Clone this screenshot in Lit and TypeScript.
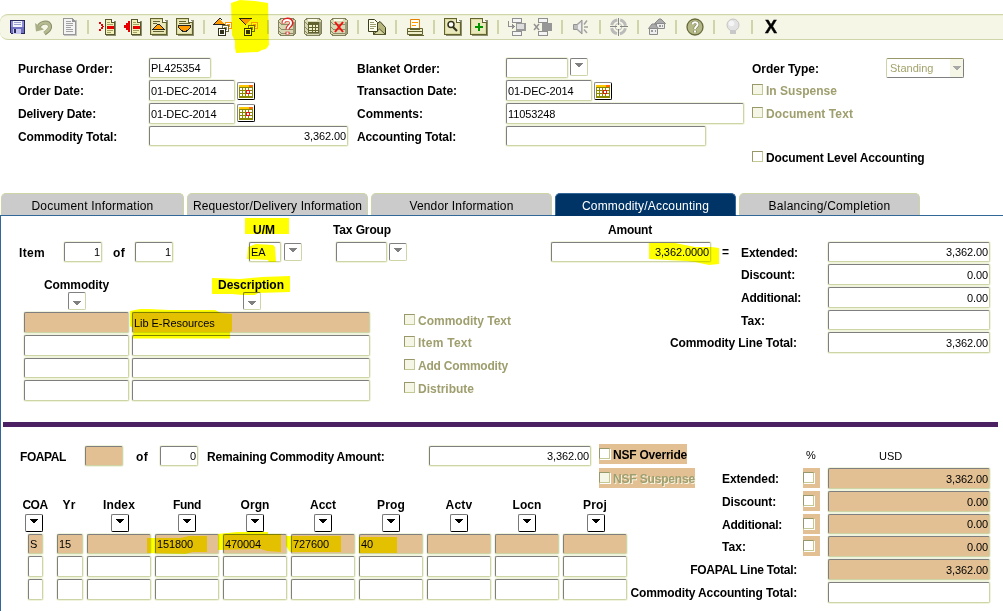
import { LitElement, html, svg, css, nothing } from "lit";
import { customElement } from "lit/decorators.js";
import { classMap } from "lit/directives/class-map.js";

const FAMILY = '"Liberation Sans", Arial, sans-serif';
const BOLD = `bold 12px ${FAMILY}`;
const TAB = `12px ${FAMILY}`;
const VALUE = `11px ${FAMILY}`;

const ruler = document.createElement("canvas").getContext("2d")!;

// letter spacing that makes a text run take up the given width
function tracking(text: string, width: number, font: string) {
	ruler.font = font;
	return `letter-spacing:${((width - ruler.measureText(text).width) / text.length).toFixed(3)}px`;
}

const label = (text: string, width: number, cls = "") => html`
	<span class="label ${cls}" style="${tracking(text, width, BOLD)}">${text}</span>
`;

// digits are 6px wide, everything else follows the font
function valueWidth(text: string) {
	ruler.font = VALUE;
	const digits = (text.match(/\d/g) ?? []).length;
	const dashes = (text.match(/-/g) ?? []).length;
	return ruler.measureText(text).width - digits * 0.12 - dashes * 0.6;
}

type FieldOptions = { right?: boolean; current?: boolean; tall?: boolean };

function field(width: string, value = "", { right = false, current = false, tall = false }: FieldOptions = {}) {
	const classes: Record<string, boolean> = { field: true, right, current, tall };
	if (width) classes[width] = true;

	return html`
		<div class="${classMap(classes)}">
			${value ? html`<span style="${tracking(value, valueWidth(value), VALUE)}">${value}</span>` : nothing}
		</div>
	`;
}

const lov = (cls = "") => html`
	<div class="lov ${cls}">
		<svg width="8" height="5" shape-rendering="crispEdges"><path d="M0 0H8V1H7V2H6V3H5V4H3V3H2V2H1V1H0Z" fill="currentColor" /></svg>
	</div>
`;

const calendar = () => html`
	<div class="calendar">
		<svg width="14" height="14" shape-rendering="crispEdges">
			<path d="M0 1H14V14H0Z" fill="#8a8a00" />
			<path d="M0 1H14V3H0Z" fill="#ffc800" />
			<path d="M10 1H14V3H10Z" fill="#ff6a00" />
			<path d="M1 4h2v2H1zM4 4h2v2H4zM7 4h2v2H7zM10 4h3v2h-3zM1 7h2v2H1zM4 7h2v2H4zM11 7h2v2h-2zM1 10h2v2H1zM4 10h2v2H4zM7 10h2v2H7zM10 10h3v2h-3z" fill="#fff" />
			<path d="M7 6H11V10H7Z" fill="#e01818" />
			<path d="M8 7H10V9H8Z" fill="#fff" />
		</svg>
	</div>
`;

const check = (text = "", width = 0, cls = "") => html`
	<div class="check ${cls}">
		<i class="box"></i>
		${text ? label(text, width) : nothing}
	</div>
`;

const page = svg`
	<path d="M3 3H19V19H3Z" fill="#8d8d70" />
	<path d="M1.5 1.5H13.5L17.5 5.5V17.5H1.5Z" fill="#dadaa0" stroke="#62622f" />
	<path d="M3 3H13V6H16V16H3Z" fill="#e9e9bd" />
	<path d="M13.5 1.5V5.5H17.5" fill="#fff" stroke="#62622f" />
`;

const record = svg`
	<path d="M9 4H19V19H9Z" fill="#8d8d70" />
	<path d="M8.5 2.5H14.5L17.5 5.5V17.5H8.5Z" fill="#f2f2b8" stroke="#55552e" />
	<path d="M14.5 2.5V5.5H17.5" fill="#fff" stroke="#55552e" />
	<path d="M10 5.5H13M10 7.5H16M10 13.5H16M10 15.5H14" stroke="#a2a268" />
	<path d="M10 9H17V12H10Z" fill="#e80000" />
`;

const database = svg`
	<path d="M1.5 3.5L4 1.5H16L18.5 3.5V16.5L16 18.5H4L1.5 16.5Z" fill="#d8d8b4" stroke="#80805a" />
	<path d="M2 5.5L5 7.5H15L18 5.5M2 10.5L5 12.5H15L18 10.5M2 14.5L5 16.5H15L18 14.5" fill="none" stroke="#8c8c68" />
	<path d="M5 2H14V4H5Z" fill="#fafae8" />
	<path d="M16 5H18V17H16Z" fill="#9b9b79" />
`;

// squares stacked in front of each other
const stack = svg`
	<path d="M12 5H19V12H12Z" fill="#ff9900" />
	<path d="M13 6H18V11H13Z" fill="#fff" />
	<path d="M14 7H17V10H14Z" fill="#ff9900" />
	<path d="M9 8H16V15H9Z" fill="#6b6b3c" />
	<path d="M10 9H15V14H10Z" fill="#fff" />
	<path d="M11 10H14V13H11Z" fill="#8f8f5c" />
	<path d="M5 11H13V19H5Z" fill="#33331c" />
	<path d="M6 12H12V18H6Z" fill="#fff" />
	<path d="M7 13H11V17H7Z" fill="#33331c" />
`;

const icons: Record<string, unknown> = {
	save: svg`
		<path d="M3 3H17L18 4V17H4L3 16Z" fill="#28285a" />
		<path d="M4 4H6V16H4ZM15 4H17V16H15Z" fill="#8c8cd8" />
		<path d="M4 10H17V16H4Z" fill="#7070c0" />
		<path d="M6 4H15V10H6Z" fill="#f4f4ff" />
		<path d="M7 5H14V6H7ZM7 7H14V8H7Z" fill="#9aa0d0" />
		<path d="M6 12H14V17H6Z" fill="#c6c6ee" />
		<path d="M7 12H9V16H7Z" fill="#28285a" />`,
	undo: svg`
		<g shape-rendering="auto">
			<path d="M5 11.5C6.5 5 15 3.5 17 8.5C18 12 15 14 11.5 16.5" fill="none" stroke="#8b906d" stroke-width="4" />
			<path d="M5 11.5C6.5 5.5 14.5 4 16.6 8.5C17.5 12 15 13.5 11.5 16" fill="none" stroke="#b5ba91" stroke-width="2.6" />
			<path d="M2 6L3 14.5L11 12.5Z" fill="#a9ae86" />
		</g>`,
	doc: svg`
		<path d="M5 3H18V19H5Z" fill="#c4c4c4" />
		<path d="M4 1H14V2H15V3H16V4H17V18H4Z" fill="#969696" />
		<path d="M5 2H13V5H16V17H5Z" fill="#f4f4f4" />
		<path d="M7 4.5H12M7 6.5H14M7 8.5H14M7 10.5H12M7 12.5H14M7 14.5H14" stroke="#a2a2a2" />`,
	insert: svg`${record}<path d="M2 5H4V7H6V9H7V10H6V12H4V14H2V12H4V10H5V9H4V7H2Z" fill="#e80000" />`,
	remove: svg`${record}<path d="M7 4V15H5V13H3V11H1V8H3V6H5V4Z" fill="#e80000" />`,
	prev: svg`${page}<path d="M4 4.5H11M4 6.5H8M4 14.5H15" stroke="#62622f" /><path d="M3 13V12H4V11H5V10H6V9H7V8H8V7H11V8H12V9H13V10H14V11H15V12H16V13Z" fill="#222" /><path d="M5 12V11H6V10H7V9H8V8H11V9H12V10H13V11H14V12Z" fill="#ff9900" />`,
	next: svg`${page}<path d="M4 4.5H11M4 6.5H15" stroke="#62622f" /><path d="M3 8H16V11H15V12H14V13H13V14H12V15H7V14H6V13H5V12H4V11H3Z" fill="#222" /><path d="M4 9H15V11H14V12H13V13H11V14H8V13H6V12H5V11H4Z" fill="#ff9900" />`,
	up: svg`${stack}<path d="M1 7H2V6H3V5H4V4H5V3H6V2H7V3H8V4H9V5H10V6H11V7Z" fill="#ff9900" /><path d="M1 6H2V5H3V4H4V3H5V2H6V1H8V2H9V3H8V2H6V3H5V4H4V5H3V6H2V7H12V8H0V7H1Z" fill="#222" />`,
	down: svg`${stack}<path d="M1 2H12V3H11V4H10V5H9V6H8V7H5V6H4V5H3V4H2V3H1Z" fill="#ff9900" /><path d="M0 1H13V2H0ZM1 2H2V3H3V4H4V5H5V6H6V7H7V8H6V7H5V6H4V5H3V4H2V3H1Z" fill="#222" />`,
	query: svg`${database}<g shape-rendering="auto" fill="none"><path d="M6.5 6.5C6 1.5 15 1 14.5 6.2C14.2 9 10.5 9 10.5 12.5M10.5 14.8V17.6" stroke="#e02020" stroke-width="4" /><path d="M6.5 6.2C6.5 2 14.5 2 14 6.2C13.8 9 10.5 9 10.5 12.3M10.5 15.2V17.2" stroke="#fff" stroke-width="2" /></g>`,
	table: svg`${database}<path d="M5 5H16V16H5Z" fill="#62622f" /><path d="M6 8H9V10H6ZM10 8H12V10H10ZM13 8H15V10H13ZM6 11H9V13H6ZM10 11H12V13H10ZM13 11H15V13H13ZM6 14H9V15H6ZM10 14H12V15H10ZM13 14H15V15H13Z" fill="#eeeeca" />`,
	cancel: svg`${database}<path d="M6 5L14 15M14 5L6 15" shape-rendering="auto" stroke="#f01010" stroke-width="2" />`,
	message: svg`
		<g shape-rendering="auto">
			<path d="M7 9L13 4.5L18.5 10.5V17.5H6.5Z" fill="#b6b67c" stroke="#3c3c1e" />
			<path d="M6.5 17.5L12.5 12L18.5 17.5Z" fill="#d5d5a2" stroke="#55552e" />
			<path d="M1.5 2.5H7.5L10.5 5.5V14.5H1.5Z" fill="#fffff0" stroke="#3c3c1e" />
			<path d="M3 5.5H7M3 7.5H9M3 9.5H9M3 11.5H7" stroke="#9c9c70" />
		</g>`,
	print: svg`
		<g shape-rendering="auto">
			<path d="M5.5 2.5H14.5V11.5H5.5Z" fill="#fff" stroke="#e58000" />
			<path d="M7 5.5H13M7 8.5H11" stroke="#ff9900" />
			<path d="M2.5 11.5H17.5V17.5H2.5Z" fill="#eeeec9" stroke="#62622f" />
			<path d="M5 12H15V13H5ZM3 14H17V15H3ZM4 18H19V19H4Z" fill="#62622f" />
		</g>`,
	find: svg`${page}<g shape-rendering="auto"><circle cx="8" cy="7.5" r="3" fill="#fff" stroke="#33331c" stroke-width="1.5" /><path d="M10 10L14 14" stroke="#33331c" stroke-width="2.2" /></g>`,
	add: svg`${page}<path d="M9 6H11V9H14V11H11V14H9V11H6V9H9Z" fill="#009400" />`,
	flowIn: svg`
		<path d="M5 1H15V6H5ZM5 14H15V19H5Z" fill="#8f8f8f" /><path d="M6 2H14V5H6ZM6 15H14V18H6Z" fill="#f4f4f4" />
		<path d="M9 6H19V14H9Z" fill="#999" /><path d="M10 7H17V12H10Z" fill="#ddd" />
		<path d="M1 4H2V9H5V7H6V8H7V9H8V10H7V11H6V12H5V10H1Z" fill="#8f8f8f" />`,
	flowOut: svg`
		<path d="M5 1H15V6H5ZM5 14H15V19H5Z" fill="#8f8f8f" /><path d="M6 2H14V5H6ZM6 15H14V18H6Z" fill="#f4f4f4" />
		<path d="M9 6H19V14H9Z" fill="#979797" />
		<path d="M1 7L6 13M6 7L1 13" fill="none" stroke="#929292" shape-rendering="auto" stroke-width="1.5" />`,
	sound: svg`
		<g shape-rendering="auto">
			<path d="M2.5 7.5H6L11 3V17L6 12.5H2.5Z" fill="#bdbdbd" stroke="#939393" />
			<path d="M7 8L10 5.5V14.5L7 12Z" fill="#eee" />
			<path d="M13 7.5L16 3.5M13 9.9H17M13 12.5L16 16" stroke="#a2a2a2" stroke-width="1.5" />
		</g>`,
	target: svg`
		<g shape-rendering="auto" fill="none" stroke="#bababa">
			<circle cx="9.5" cy="9.8" r="7" stroke-width="3" stroke-dasharray="8 3" stroke-dashoffset="-1.5" />
			<circle cx="9.5" cy="9.8" r="3.3" />
		</g>
		<path d="M9.5 1V8M9.5 12V19M1 9.5H8M11 9.5H19" stroke="#858585" />`,
	houses: svg`
		<g shape-rendering="auto">
			<path d="M7.5 6.5L12 2H14L18.5 6.5Z" fill="#aaa" stroke="#8a8a8a" />
			<path d="M9.5 6.5H17.5V11.5H9.5Z" fill="#eee" stroke="#8a8a8a" />
			<path d="M1.5 11.5L5 7H8L11.5 11.5Z" fill="#aaa" stroke="#8a8a8a" />
			<path d="M2.5 11.5H10.5V17.5H2.5Z" fill="#eee" stroke="#8a8a8a" />
			<path d="M4 13H6V15H4ZM8 13H9V15H8ZM12 8H14V10H12ZM15 8H16V10H15Z" fill="#999" />
		</g>`,
	help: svg`
		<g shape-rendering="auto" fill="none">
			<circle cx="10" cy="10" r="8" fill="#b4b887" stroke="#676b3b" stroke-width="1.3" />
			<path d="M7.5 7.5C7.5 4.5 12.8 4.5 12.6 7.6C12.4 9.5 10 9.7 10 12M10 13.6V15.6" stroke="#7c8054" stroke-width="3.2" />
			<path d="M7.5 7.5C7.5 4.5 12.8 4.5 12.6 7.6C12.4 9.5 10 9.7 10 12M10 13.6V15.6" stroke="#fff" stroke-width="2" />
		</g>`,
	hint: svg`
		<g shape-rendering="auto">
			<circle cx="10" cy="8" r="6" fill="#e3e3e3" stroke="#c4c4c4" />
			<circle cx="8.5" cy="6.5" r="2.8" fill="#f5f5f5" />
			<path d="M7 13H13V17H7Z" fill="#c8c8c8" />
		</g>`,
};

const toolbar = [
	"save", "undo", "doc", "|", "insert", "remove", "prev", "next", "|", "up", "down", "|",
	"query", "table", "cancel", "|", "message", "|", "print", "|", "find", "add", "|",
	"flowIn", "flowOut", "|", "sound", "|", "target", "|", "houses", "|", "help", "|", "hint", "|", "exit",
];

const tabs = [
	{ text: "Document Information", width: 122 },
	{ text: "Requestor/Delivery Information", width: 169 },
	{ text: "Vendor Information", width: 104 },
	{ text: "Commodity/Accounting", width: 127, active: true },
	{ text: "Balancing/Completion", width: 122 },
];

const foapal = [
	{ cls: "coa", name: "COA", width: 25, value: "S" },
	{ cls: "yr", name: "Yr", width: 13, value: "15" },
	{ cls: "seg index", name: "Index", width: 32, value: "" },
	{ cls: "seg", name: "Fund", width: 28, value: "151800" },
	{ cls: "seg", name: "Orgn", width: 29, value: "470004" },
	{ cls: "seg", name: "Acct", width: 26, value: "727600" },
	{ cls: "seg", name: "Prog", width: 28, value: "40" },
	{ cls: "seg", name: "Actv", width: 27, value: "" },
	{ cls: "seg", name: "Locn", width: 29, value: "" },
	{ cls: "seg proj", name: "Proj", width: 24, value: "" },
];

// marker strokes laid over the form
const marks = [
	"231,3 240,0 255,1 268,3 269,45 266,49 262,50 258,52 236,53 235,48 235,41 232,35",
	"245,218 289,218 289,234 245,234",
	"248,247 256,244 273,245 275,247 276,262 269,262 268,260 247,259",
	"212,278 240,279 262,277 290,276 290,292 258,293 255,295 243,295 232,294 212,294",
	"130,311 140,309 149,309 169,310 215,310 221,313 232,314 232,331 230,332 230,338.5 133,338.5 133,328 130,326",
	"649,243 675,243 695,247 711,247 719,248 719,264 709,265 695,262 686,261 649,259",
	"147,538 180,538 189,536 207,536 207,552 193,552 185,554 147,553",
	"218,534 237,532 268,532 268,534 281,534 281,552 267,551 261,549 218,550",
	"286,536 341,536 341,552 290,552 286,546",
	"359,537 397,537 397,553 359,553",
];

@customElement("app-root")
export class AppRoot extends LitElement {
	static override styles = css`
		:host {
			display: block;
			position: relative;
			isolation: isolate;
			width: 1003px;
			height: 611px;
			overflow: hidden;
			background: #fff;
			color: #000;
			font: 11px "Liberation Sans", Arial, sans-serif;
		}

		.marks {
			position: absolute;
			inset: 0;
			mix-blend-mode: multiply;
			pointer-events: none;
		}

		.toolbar {
			display: flex;
			align-items: center;
			box-sizing: border-box;
			height: 26px;
			margin-top: 14px;
			padding-left: 4px;
			background: #f6f6e6;
			border-block: 1px solid #cfd5a8;
			border-radius: 8px 0 0 8px;
			box-shadow: inset 0 1px #eef0d6;
		}

		.tool {
			display: flex;
			justify-content: center;
			width: 26px;

			& svg { display: block }
		}

		.sep {
			width: 2px;
			height: 14px;
			margin-inline: 5px;
			background: #cfd5a8;
		}

		.exit {
			font-size: 18px;
			font-weight: bold;
			line-height: 20px;
			-webkit-text-stroke: .4px #000;
		}

		.label {
			display: block;
			flex: none;
			height: 21px;
			font-size: 12px;
			font-weight: bold;
			line-height: 22px;
			white-space: nowrap;
		}

		.field {
			box-sizing: border-box;
			height: 20px;
			flex: none;
			padding: 0 1px;
			background: #fff;
			border: 1px solid;
			border-color: #7f7f7f #cdd4a6 #cdd4a6 #7f7f7f;
			border-radius: 2px;
			box-shadow: 0 0 0 1px #f1f4dd;
			line-height: 19px;
			white-space: nowrap;

			&.tall { height: 21px; line-height: 20px }
			&.right { text-align: right }
			&.current { background: #e3c093 }
		}

		.w32 { width: 32px }
		.w38 { width: 38px }
		.w51 { width: 51px }
		.w62 { width: 62px }
		.w86 { width: 86px }
		.w105 { width: 105px }
		.w160 { width: 160px }
		.w162 { width: 162px }
		.w199 { width: 199px }
		.w200 { width: 200px }
		.w238 { width: 238px }

		.lov, .calendar {
			display: flex;
			justify-content: center;
			box-sizing: border-box;
			flex: none;
			width: 18px;
			height: 18px;
			background: #fff;
			border: 1px solid;
			border-radius: 2px;
		}

		.lov {
			padding-top: 4px;
			color: #808080;
			border-color: #808080 #cdd4a6 #cdd4a6 #808080;

			&.on {
				color: #000;
				border-color: #777 #000 #000 #777;
			}
		}

		.calendar {
			padding-top: 1px;
			border-color: #888 #000 #000 #888;
		}

		.check {
			display: flex;
			align-items: flex-start;
			gap: 3px;

			& .box {
				box-sizing: border-box;
				width: 11px;
				height: 11px;
				margin-top: 4px;
				background: #fff;
				border: 1px solid;
				border-color: #98986a #c4c894 #c4c894 #98986a;
			}

			&.off { color: #9e9e6e }
			&.off .box { background: #f6f6e6 }
		}

		.header {
			display: grid;
			grid-template-columns: 131px 208px 149px 246px 134px 78px;
			grid-template-rows: 22px 23px 23px 21px 24px;
			height: 135px;
			box-sizing: border-box;
			margin-top: 18px;
			padding-left: 18px;

			& .label { line-height: 23px }
			& .pair {
				display: flex;
				align-items: flex-start;
				gap: 2px;
			}

			& .check { grid-column: 5 / 7 }
			& .calendar { margin-top: 2px }
			& .second .calendar { margin-top: 1px }
		}

		.select {
			display: flex;
			box-sizing: border-box;
			width: 78px;
			height: 20px;
			padding-left: 3px;
			border: 1px solid;
			border-color: #98986a #7f7f7f #7f7f7f #cdd4a6;
			border-radius: 2px;
			color: #a3a36c;
			line-height: 19px;

			& span { flex: 1 }
			& i {
				display: flex;
				justify-content: center;
				width: 13px;
				padding-top: 7px;
				color: #a8a8a8;
				background: #f6f6e6;
			}
		}

		.tabs {
			display: flex;
			gap: 3px;
			height: 22px;
			padding-left: 1px;
		}

		.tab {
			box-sizing: border-box;
			width: 181px;
			background: #cbcbcb;
			border: 1px solid #cdd4a6;
			border-bottom: 0;
			border-radius: 5px 5px 0 0;
			font-size: 12px;
			line-height: 24px;
			text-align: center;
			white-space: nowrap;

			&:first-child { width: 183px }

			&.active {
				color: #fff;
				background: #036;
				border-color: #369 #369 #036;
				box-shadow: 0 1px #036;
			}
		}

		.panel {
			box-sizing: border-box;
			height: 396px;
			border-top: 1px solid #369;
			border-left: 1px solid #369;
		}

		.upper {
			display: grid;
			grid-template-columns: 403px 146px 190px 1fr;
			height: 206px;
		}

		.caption { display: flex; height: 26px; padding-top: 3px; box-sizing: border-box }
		.um { margin-left: 252px }
		.tax { margin-left: 58px }

		.items {
			display: flex;
			height: 31px;

			& .of { margin-left: 11px; width: 22px }
			& .item { margin-left: 18px; width: 45px }
			& .um-field { display: flex; gap: 3px; margin-left: 76px }
			& .tax-field { display: flex; gap: 2px; margin-left: 34px }
			& .lov { margin-top: 1px }
		}

		.heads {
			display: grid;
			grid-template-columns: 105px 238px;
			column-gap: 3px;
			padding-left: 23px;
			height: 39px;

			& div { display: flex; flex-direction: column; align-items: center }
			& .label { height: 19px; line-height: 24px }
			& .lov { margin-left: 1px }
		}

		.lines {
			display: grid;
			grid-template-columns: 105px 238px;
			grid-template-rows: 23px 23px 22px 21px;
			column-gap: 3px;
			padding-left: 23px;
		}

		.flags {
			display: grid;
			grid-template-rows: 22px 23px 23px 23px;
			align-content: start;
			padding-top: 94px;

			& .label { line-height: 23px }
		}

		.amount {
			display: flex;
			flex-direction: column;
			padding-top: 3px;

			& .head { display: flex; justify-content: center; width: 160px; height: 21px }
			& .row { display: flex; padding-left: 1px; padding-top: 2px }
			& .eq { margin-left: 11px; line-height: 21px; font-size: 12px; font-weight: bold }
		}

		.totals {
			display: grid;
			grid-template-rows: 22px 23px 23px 22px 21px;
			grid-template-columns: 88px 162px;
			align-content: start;
			padding-top: 26px;

			& .label { line-height: 23px }
			& .wide { justify-self: end; margin-right: 31px }
			& .t1 { padding-left: 1px }
		}

		.rule {
			height: 5px;
			margin: 0 5px 0 2px;
			background: #4b2163;
		}

		.lower {
			display: grid;
			grid-template-columns: 628px 174px 25px 162px;
			padding-top: 17px;
		}

		.summary {
			display: flex;
			align-items: flex-start;
			padding: 2px 0 0 19px;
			height: 50px;
			box-sizing: border-box;

			& .label { line-height: 23px }
			& .foapal { width: 65px }
			& .of { width: 24px; margin-left: 13px }
			& .remaining { width: 222px; margin-left: 9px }
			& .nsf { display: flex; flex-direction: column; gap: 4px; margin: -2px -110px 0 8px }
			& .nsf .check {
				height: 20px;
				align-self: flex-start;
				background: #e3c093;
			}
			& .nsf .off .label { text-shadow: 1px 1px #f6f6e6 }
			& .nsf .box { box-shadow: 1px 1px #fff }
		}

		.grid {
			display: flex;
			padding-left: 24px;
		}

		.column {
			display: flex;
			flex-direction: column;
			align-items: center;
			width: 64px;
			margin-left: 4px;

			& .label { height: 20px; line-height: 22px }
			& .lov { margin: 0 1px 2px 0 }
			& .field { width: 100%; margin-bottom: 2px }
			& .blank { height: 20px }

			&.coa { width: 15px; margin-left: 3px }
			&.coa .label { margin-right: 1px }
			&.coa .lov { margin-left: -3px; margin-right: 0 }
			&.yr { width: 26px; margin-left: 14px }
			&.yr .label { margin-right: 2px }
			&.index .lov { margin-left: 2px; margin-right: 0 }
			&.proj .lov { margin-left: 2px; margin-right: 0 }
		}

		.sums, .percents, .usd {
			display: grid;
			grid-template-rows: 24px 23px 23px 22px 23px 23px 21px;
			align-content: start;
		}

		.sums {
			& .label { padding-left: 93px; line-height: 23px }
			& .total { justify-self: end; padding: 0; margin-right: 6px }
		}

		.percents {
			& .sign { padding-left: 3px; line-height: 22px }
			& .check {
				width: 17px;
				height: 20px;
				background: #e3c093;
			}
			& .box { box-shadow: 1px 1px #fff }
		}

		.usd .code { padding-left: 51px; line-height: 24px }
	`;

	private renderToolbar() {
		return html`
			<div class="toolbar">
				${toolbar.map((name) => {
					if (name === "|") return html`<i class="sep"></i>`;
					if (name === "exit") return html`<div class="tool exit">X</div>`;

					return html`
						<div class="tool">
							<svg width="20" height="20" viewBox="0 0 20 20" shape-rendering="crispEdges">${icons[name]}</svg>
						</div>
					`;
				})}
			</div>
		`;
	}

	private renderHeader() {
		return html`
			<div class="header">
				${label("Purchase Order:", 95)}
				${field("w62", "PL425354")}
				${label("Blanket Order:", 83)}
				<div class="pair">${field("w62")}${lov()}</div>
				${label("Order Type:", 67)}
				<div class="select">
					<span>Standing</span>
					<i><svg width="8" height="5" shape-rendering="crispEdges"><path d="M0 0H8V1H7V2H6V3H5V4H3V3H2V2H1V1H0Z" fill="currentColor" /></svg></i>
				</div>

				${label("Order Date:", 66)}
				<div class="pair">${field("w86", "01-DEC-2014", { tall: true })}${calendar()}</div>
				${label("Transaction Date:", 100)}
				<div class="pair">${field("w86", "01-DEC-2014", { tall: true })}${calendar()}</div>
				${check("In Suspense", 71, "off")}

				${label("Delivery Date:", 78)}
				<div class="pair second">${field("w86", "01-DEC-2014", { tall: true })}${calendar()}</div>
				${label("Comments:", 66)}
				${field("w238", "11053248", { tall: true })}
				${check("Document Text", 87, "off")}

				${label("Commodity Total:", 99)}
				${field("w199", "3,362.00", { right: true })}
				${label("Accounting Total:", 99)}
				${field("w200")}
				<span></span><span></span>

				<span></span><span></span><span></span><span></span>
				${check("Document Level Accounting", 159)}
			</div>
		`;
	}

	private renderTabs() {
		return html`
			<div class="tabs">
				${tabs.map(
					(tab) => html`
						<div class="${classMap({ tab: true, active: !!tab.active })}">
							<span style="${tracking(tab.text, tab.width, TAB)}">${tab.text}</span>
						</div>
					`
				)}
			</div>
		`;
	}

	private renderUpper() {
		const tall = { tall: true };

		return html`
			<div class="upper">
				<div>
					<div class="caption">${label("U/M", 22, "um")}${label("Tax Group", 58, "tax")}</div>
					<div class="items">
						${label("Item", 26, "item")}
						${field("w38", "1", { right: true })}
						${label("of", 12, "of")}
						${field("w38", "1", { right: true })}
						<div class="um-field">${field("w32", "EA")}${lov()}</div>
						<div class="tax-field">${field("w51")}${lov()}</div>
					</div>
					<div class="heads">
						<div>${label("Commodity", 65)}${lov()}</div>
						<div>${label("Description", 66)}${lov()}</div>
					</div>
					<div class="lines">
						${field("w105", "", { tall: true, current: true })}
						${field("w238", "Lib E-Resources", { tall: true, current: true })}
						${field("w105", "", tall)}${field("w238", "", tall)}
						${field("w105")}${field("w238")}
						${field("w105", "", tall)}${field("w238", "", tall)}
					</div>
				</div>
				<div class="flags">
					${check("Commodity Text", 93, "off")}
					${check("Item Text", 54, "off")}
					${check("Add Commodity", 90, "off")}
					${check("Distribute", 56, "off")}
				</div>
				<div class="amount">
					<div class="head">${label("Amount", 44)}</div>
					<div class="row">${field("w160", "3,362.0000", { right: true })}<span class="eq">=</span></div>
				</div>
				<div class="totals">
					${label("Extended:", 57, "t1")}${field("w162", "3,362.00", { right: true })}
					${label("Discount:", 54, "t1")}${field("w162", "0.00", { right: true, tall: true })}
					${label("Additional:", 60, "t1")}${field("w162", "0.00", { right: true, tall: true })}
					${label("Tax:", 24, "t1")}${field("w162")}
					${label("Commodity Line Total:", 127, "wide")}${field("w162", "3,362.00", { right: true, tall: true })}
				</div>
			</div>
		`;
	}

	private renderLower() {
		const sum = (value: string, tall = true) => field("w162", value, { right: true, current: true, tall });

		return html`
			<div class="lower">
				<div>
					<div class="summary">
						${label("FOAPAL", 46, "foapal")}
						${field("w38", "", { current: true })}
						${label("of", 12, "of")}
						${field("w38", "0", { right: true })}
						${label("Remaining Commodity Amount:", 178, "remaining")}
						${field("w162", "3,362.00", { right: true })}
						<div class="nsf">
							${check("NSF Override", 74)}
							${check("NSF Suspense", 82, "off")}
						</div>
					</div>
					<div class="grid">
						${foapal.map(
							(col) => html`
								<div class="column ${col.cls}">
									${label(col.name, col.width)}
									${col.name === "Yr" ? html`<span class="blank"></span>` : lov("on")}
									${field("", col.value, { current: true })}
									${field("", "", { tall: true })}
									${field("", "", { tall: true })}
								</div>
							`
						)}
					</div>
				</div>
				<div class="sums">
					<span></span>
					${label("Extended:", 57)}
					${label("Discount:", 54)}
					${label("Additional:", 60)}
					${label("Tax:", 24)}
					${label("FOAPAL Line Total:", 107, "total")}
					${label("Commodity Accounting Total:", 167, "total")}
				</div>
				<div class="percents">
					<span class="sign">%</span>
					${[1, 2, 3, 4].map(() => check())}
				</div>
				<div class="usd">
					<span class="code">USD</span>
					${sum("3,362.00")}
					${sum("0.00")}
					${sum("0.00", false)}
					${sum("0.00")}
					${sum("3,362.00")}
					${field("w162", "", { tall: true })}
				</div>
			</div>
		`;
	}

	override render() {
		return html`
			${this.renderToolbar()}
			${this.renderHeader()}
			${this.renderTabs()}
			<div class="panel">
				${this.renderUpper()}
				<div class="rule"></div>
				${this.renderLower()}
			</div>
			<svg class="marks" width="1003" height="611">
				${marks.map((points) => svg`<polygon points="${points}" fill="#ff0" />`)}
			</svg>
		`;
	}
}
